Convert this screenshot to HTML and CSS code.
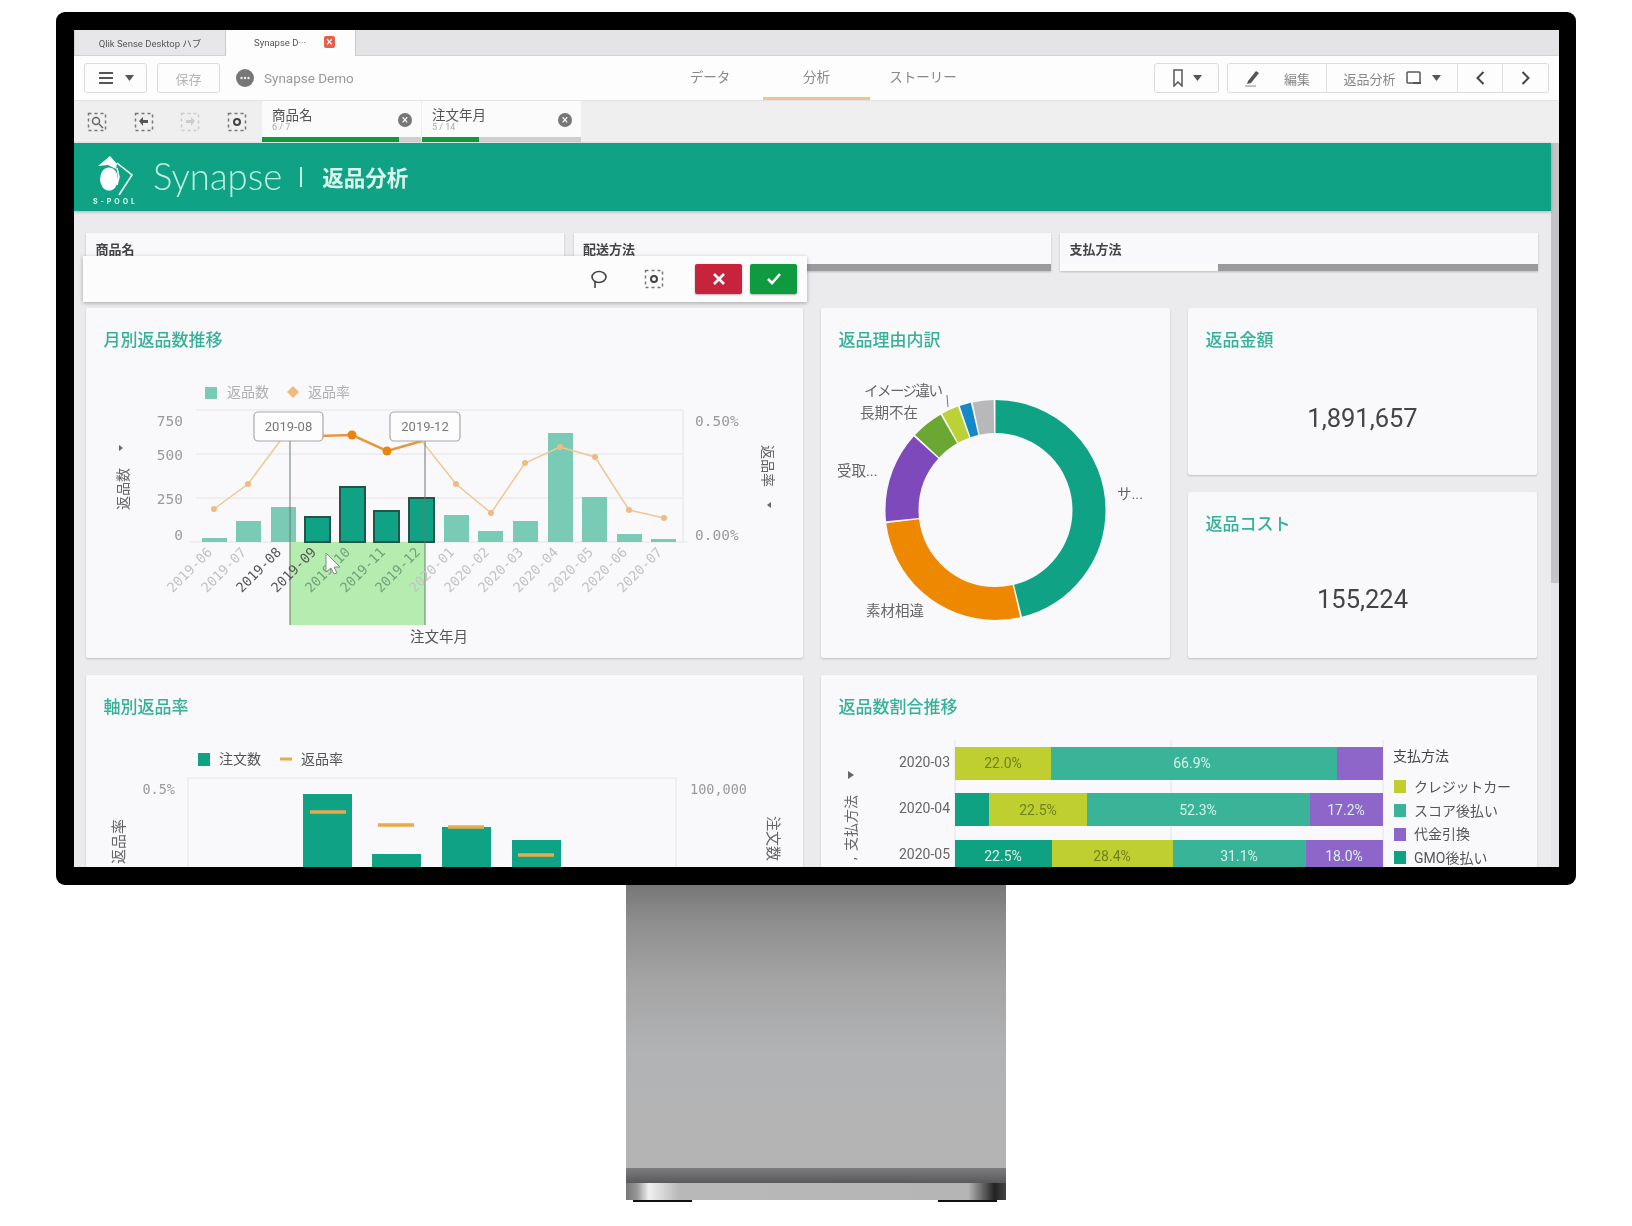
FILE: index.html
```html
<!DOCTYPE html>
<html lang="ja">
<head>
    <meta charset="UTF-8">
    <title>Synapse Demo - 返品分析</title>
    <link rel="stylesheet" href="styles.css">
</head>
<body>
    <div class="monitor">
        <div class="screen">
            <div class="tabbar">
                <div class="tab">Qlik Sense Desktop ハブ</div>
                <div class="tab tab-active">
                    <span>Synapse D···</span>
                    <span class="tab-close">×</span>
                </div>
            </div>

            <div class="toolbar">
                <div class="tool-left">
                    <div class="btn btn-menu">
                        <svg width="16" height="14" viewBox="0 0 16 14"><path d="M1 2h14M1 7h14M1 12h14" stroke="#555" stroke-width="2"/></svg>
                        <svg width="9" height="6" viewBox="0 0 9 6"><path d="M0 0h9L4.5 6z" fill="#555"/></svg>
                    </div>
                    <div class="btn btn-save">保存</div>
                    <svg class="app-icon" width="18" height="18" viewBox="0 0 18 18"><circle cx="9" cy="9" r="9" fill="#777"/><circle cx="5.5" cy="9" r="1.2" fill="#eee"/><circle cx="9" cy="9" r="1.2" fill="#eee"/><circle cx="12.5" cy="9" r="1.2" fill="#eee"/></svg>
                    <span class="app-name">Synapse Demo</span>
                </div>
                <div class="nav">
                    <div class="nav-item">データ</div>
                    <div class="nav-item nav-active">分析</div>
                    <div class="nav-item">ストーリー</div>
                </div>
                <div class="tool-right">
                    <div class="btn btn-bookmark">
                        <svg width="12" height="18" viewBox="0 0 12 18"><path d="M2 1h8v16l-4-4-4 4z" fill="none" stroke="#555" stroke-width="1.5"/></svg>
                        <svg width="9" height="6" viewBox="0 0 9 6"><path d="M0 0h9L4.5 6z" fill="#555"/></svg>
                    </div>
                    <div class="btn-group">
                        <div class="seg seg-edit">
                            <svg width="18" height="18" viewBox="0 0 18 18"><path d="M4 12 12 2l3 2-8 10-4 1z" fill="#555"/><path d="M1 17h11" stroke="#888" stroke-width="1"/></svg>
                            <span>編集</span>
                        </div>
                        <div class="seg seg-sheet">
                            <span>返品分析</span>
                            <svg width="16" height="14" viewBox="0 0 16 14"><rect x="1" y="1" width="13" height="11" rx="1" fill="none" stroke="#555" stroke-width="1.5"/><path d="M7 12h8" stroke="#555" stroke-width="2"/></svg>
                            <svg width="9" height="6" viewBox="0 0 9 6"><path d="M0 0h9L4.5 6z" fill="#555"/></svg>
                        </div>
                        <div class="seg seg-arrow">
                            <svg width="9" height="14" viewBox="0 0 9 14"><path d="M7.5 1 1.5 7l6 6" fill="none" stroke="#444" stroke-width="2"/></svg>
                        </div>
                        <div class="seg seg-arrow">
                            <svg width="9" height="14" viewBox="0 0 9 14"><path d="m1.5 1 6 6-6 6" fill="none" stroke="#444" stroke-width="2"/></svg>
                        </div>
                    </div>
                </div>
            </div>

            <div class="selbar">
                <div class="sel-icon">
                    <svg width="20" height="20" viewBox="0 0 20 20"><rect x="1.5" y="1.5" width="17" height="17" fill="none" stroke="#777" stroke-width="1.5" stroke-dasharray="3 3"/><circle cx="9" cy="9" r="3.5" fill="none" stroke="#666" stroke-width="1.5"/><path d="m12 12 4 4" stroke="#666" stroke-width="1.5"/></svg>
                </div>
                <div class="sel-icon">
                    <svg width="20" height="20" viewBox="0 0 20 20"><rect x="1.5" y="1.5" width="17" height="17" fill="none" stroke="#777" stroke-width="1.5" stroke-dasharray="3 3"/><path d="M5 9 9 5v3h5v3H9v3z" fill="#555"/></svg>
                </div>
                <div class="sel-icon sel-icon-off">
                    <svg width="20" height="20" viewBox="0 0 20 20"><rect x="1.5" y="1.5" width="17" height="17" fill="none" stroke="#ccc" stroke-width="1.5" stroke-dasharray="3 3"/><path d="M15 9l-4-4v3H6v3h5v3z" fill="#ccc"/></svg>
                </div>
                <div class="sel-icon">
                    <svg width="20" height="20" viewBox="0 0 20 20"><rect x="1.5" y="1.5" width="17" height="17" fill="none" stroke="#777" stroke-width="1.5" stroke-dasharray="3 3"/><circle cx="10" cy="10" r="3" fill="none" stroke="#444" stroke-width="2"/></svg>
                </div>
                <div class="chip">
                    <div class="chip-body">
                        <div class="chip-text">
                            <div class="chip-name">商品名</div>
                            <div class="chip-count">6 / 7</div>
                        </div>
                        <span class="chip-x">×</span>
                    </div>
                    <div class="chip-bar"><div class="chip-fill" style="width:86%"></div></div>
                </div>
                <div class="chip">
                    <div class="chip-body">
                        <div class="chip-text">
                            <div class="chip-name">注文年月</div>
                            <div class="chip-count">5 / 14</div>
                        </div>
                        <span class="chip-x">×</span>
                    </div>
                    <div class="chip-bar"><div class="chip-fill" style="width:36%"></div></div>
                </div>
            </div>

            <div class="sheet">
                <div class="sheet-main">
                    <div class="banner">
                        <svg class="logo" width="46" height="50" viewBox="0 0 46 50">
                            <path d="M19 0 7 10l10-1 8 4 1-5z" fill="#fff"/>
                            <ellipse cx="18" cy="23" rx="9" ry="11.5" fill="#fff"/>
                            <path d="M26 7 41 19 28 39M26 12l2 9-2 8" fill="none" stroke="#fff" stroke-width="1.5"/>
                            <text class="logo-text" x="2" y="48" textLength="42">S-POOL</text>
                        </svg>
                        <span class="brand">Synapse</span>
                        <span class="brand-sep"></span>
                        <span class="brand-page">返品分析</span>
                    </div>

                    <div class="filters">
                        <div class="filter">
                            <div class="filter-name">商品名</div>
                            <div class="filter-bar"></div>
                        </div>
                        <div class="filter">
                            <div class="filter-name">配送方法</div>
                            <div class="filter-bar"></div>
                        </div>
                        <div class="filter">
                            <div class="filter-name">支払方法</div>
                            <div class="filter-bar"><div class="filter-fill" style="width:33%"></div></div>
                        </div>
                    </div>

                    <!-- 選択中のツールバー -->
                    <div class="popup">
                        <svg width="20" height="20" viewBox="0 0 20 20"><ellipse cx="10" cy="8" rx="7" ry="5.5" fill="none" stroke="#444" stroke-width="1.6"/><path d="M6 12v7" stroke="#444" stroke-width="1.6"/></svg>
                        <svg class="popup-sel" width="20" height="20" viewBox="0 0 20 20"><rect x="1.5" y="1.5" width="17" height="17" fill="none" stroke="#777" stroke-width="1.5" stroke-dasharray="3 3"/><circle cx="10" cy="10" r="3" fill="none" stroke="#444" stroke-width="2"/></svg>
                        <div class="popup-btn popup-no">
                            <svg width="14" height="14" viewBox="0 0 14 14"><path d="m2 2 10 10M12 2 2 12" stroke="#fff" stroke-width="2.6"/></svg>
                        </div>
                        <div class="popup-btn popup-ok">
                            <svg width="16" height="14" viewBox="0 0 16 14"><path d="m2 7 4 4 8-9" fill="none" stroke="#fff" stroke-width="2.6"/></svg>
                        </div>
                    </div>

                    <div class="board">
                        <section class="card card-monthly">
                            <h2 class="card-title">月別返品数推移</h2>
                            <svg class="chart" width="717" height="310" viewBox="86 348 717 310">
                                <rect class="sq-light" x="205" y="387" width="12" height="12"/>
                                <text class="legend-soft" x="227" y="397">返品数</text>
                                <path d="M293 386l6 6-6 6-6-6z" fill="#efbb7c"/>
                                <text class="legend-soft" x="308" y="397">返品率</text>

                                <path class="grid" d="M196 410H683M196 454H683M196 498H683M189 542H687M683 410V542"/>
                                <text class="mono end" x="183" y="426">750</text>
                                <text class="mono end" x="183" y="460">500</text>
                                <text class="mono end" x="183" y="504">250</text>
                                <text class="mono end" x="183" y="540">0</text>
                                <text class="mono" x="695" y="426">0.50%</text>
                                <text class="mono" x="695" y="540">0.00%</text>

                                <path d="M119 445l4 3-4 3z" fill="#666"/>
                                <text class="axis" transform="translate(128 510) rotate(-90)">返品数</text>
                                <text class="axis" transform="translate(763 445) rotate(90)">返品率</text>
                                <path d="M771 502l-4 3 4 3z" fill="#666"/>

                                <rect x="290" y="542" width="135" height="83" fill="#b5edb0"/>

                                <rect class="bar" x="202" y="538" width="25" height="4"/>
                                <rect class="bar" x="236" y="521" width="25" height="21"/>
                                <rect class="bar" x="271" y="507" width="25" height="35"/>
                                <rect class="bar-on" x="305" y="517" width="25" height="25"/>
                                <rect class="bar-on" x="340" y="487" width="25" height="55"/>
                                <rect class="bar-on" x="374" y="511" width="25" height="31"/>
                                <rect class="bar-on" x="409" y="498" width="25" height="44"/>
                                <rect class="bar" x="444" y="515" width="25" height="27"/>
                                <rect class="bar" x="478" y="531" width="25" height="11"/>
                                <rect class="bar" x="513" y="521" width="25" height="21"/>
                                <rect class="bar" x="548" y="433" width="25" height="109"/>
                                <rect class="bar" x="582" y="497" width="25" height="45"/>
                                <rect class="bar" x="617" y="534" width="25" height="8"/>
                                <rect class="bar" x="651" y="539" width="25" height="3"/>

                                <polyline class="line" points="214,509 248,484 283,437 318,436 352,435 387,451 422,441 456,484 491,513 525,463 560,447 595,457 629,510 664,518"/>
                                <polyline class="line-on" points="318,436 352,435 387,451 422,441"/>
                                <g fill="#eebb80">
                                    <circle cx="214" cy="509" r="3"/>
                                    <circle cx="248" cy="484" r="3"/>
                                    <circle cx="456" cy="484" r="3"/>
                                    <circle cx="491" cy="513" r="3"/>
                                    <circle cx="525" cy="463" r="3"/>
                                    <circle cx="560" cy="447" r="3"/>
                                    <circle cx="595" cy="457" r="3"/>
                                    <circle cx="629" cy="510" r="3"/>
                                    <circle cx="664" cy="518" r="3"/>
                                </g>
                                <circle cx="352" cy="435" r="4.5" fill="#e5860f"/>
                                <circle cx="387" cy="451" r="4.5" fill="#e5860f"/>

                                <path d="M290 441V625M425 441V625" stroke="#6d786d" stroke-width="1"/>
                                <rect class="tip" x="254" y="412" width="69" height="29" rx="4"/>
                                <text class="tip-text" x="288.5" y="431">2019-08</text>
                                <rect class="tip" x="390" y="412" width="70" height="29" rx="4"/>
                                <text class="tip-text" x="425" y="431">2019-12</text>

                                <g class="months">
                                    <text transform="translate(213 553) rotate(-45)">2019-06</text>
                                    <text transform="translate(247 553) rotate(-45)">2019-07</text>
                                    <text class="month-dark" transform="translate(282 553) rotate(-45)">2019-08</text>
                                    <text class="month-dark" transform="translate(317 553) rotate(-45)">2019-09</text>
                                    <text class="month-sel" transform="translate(351 553) rotate(-45)">2019-10</text>
                                    <text class="month-sel" transform="translate(386 553) rotate(-45)">2019-11</text>
                                    <text class="month-sel" transform="translate(421 553) rotate(-45)">2019-12</text>
                                    <text transform="translate(455 553) rotate(-45)">2020-01</text>
                                    <text transform="translate(490 553) rotate(-45)">2020-02</text>
                                    <text transform="translate(524 553) rotate(-45)">2020-03</text>
                                    <text transform="translate(559 553) rotate(-45)">2020-04</text>
                                    <text transform="translate(594 553) rotate(-45)">2020-05</text>
                                    <text transform="translate(628 553) rotate(-45)">2020-06</text>
                                    <text transform="translate(663 553) rotate(-45)">2020-07</text>
                                </g>
                                <text class="axis-x" x="410" y="642">注文年月</text>
                                <path d="M326 553v19l5-4 3 6 3-1-3-6h6z" fill="#fff" stroke="#888" stroke-width="1"/>
                            </svg>
                        </section>

                        <section class="card card-donut">
                            <h2 class="card-title">返品理由内訳</h2>
                            <svg class="chart" width="349" height="310" viewBox="821 348 349 310">
                                <g class="donut" transform="rotate(-90 995.5 510)">
                                    <circle cx="995.5" cy="510" r="93.5" pathLength="360" stroke="#0fa284" stroke-dasharray="166 194" stroke-dashoffset="0"/>
                                    <circle cx="995.5" cy="510" r="93.5" pathLength="360" stroke="#ee8800" stroke-dasharray="96 264" stroke-dashoffset="-167"/>
                                    <circle cx="995.5" cy="510" r="93.5" pathLength="360" stroke="#7e49bb" stroke-dasharray="48 312" stroke-dashoffset="-264"/>
                                    <circle cx="995.5" cy="510" r="93.5" pathLength="360" stroke="#6aa733" stroke-dasharray="17 343" stroke-dashoffset="-313"/>
                                    <circle cx="995.5" cy="510" r="93.5" pathLength="360" stroke="#bcd135" stroke-dasharray="9 351" stroke-dashoffset="-331"/>
                                    <circle cx="995.5" cy="510" r="93.5" pathLength="360" stroke="#1488c8" stroke-dasharray="6 354" stroke-dashoffset="-341"/>
                                    <circle cx="995.5" cy="510" r="93.5" pathLength="360" stroke="#b8b8bb" stroke-dasharray="11 349" stroke-dashoffset="-348"/>
                                </g>
                                <path d="M947 395l1 12" stroke="#777" stroke-width="1"/>
                                <text class="pie-label" x="864" y="396" textLength="79">イメージ違い</text>
                                <text class="pie-label" x="860" y="418">長期不在</text>
                                <text class="pie-label" x="837" y="476">受取...</text>
                                <text class="pie-label" x="1117" y="499">サ...</text>
                                <text class="pie-label" x="866" y="616">素材相違</text>
                            </svg>
                        </section>

                        <section class="card card-kpi">
                            <h2 class="card-title">返品金額</h2>
                            <div class="kpi-value">1,891,657</div>
                        </section>

                        <section class="card card-kpi card-kpi-low">
                            <h2 class="card-title">返品コスト</h2>
                            <div class="kpi-value">155,224</div>
                        </section>

                        <section class="card card-wide-left">
                            <h2 class="card-title">軸別返品率</h2>
                            <svg class="chart" width="717" height="200" viewBox="86 715 717 200">
                                <rect x="198" y="753" width="12" height="13" fill="#0fa284"/>
                                <text class="legend" x="219" y="764">注文数</text>
                                <path d="M280 759h12" stroke="#eba94f" stroke-width="3"/>
                                <text class="legend" x="301" y="764">返品率</text>
                                <rect class="grid" x="188" y="778" width="488" height="130"/>
                                <text class="mono-s end" x="175" y="794">0.5%</text>
                                <text class="mono-s" x="690" y="794">100,000</text>
                                <text class="axis axis-lg" transform="translate(124 864) rotate(-90)">返品率</text>
                                <text class="axis axis-lg" transform="translate(768 816) rotate(90)">注文数</text>
                                <g fill="#0fa284">
                                    <rect x="303" y="794" width="49" height="100"/>
                                    <rect x="372" y="854" width="49" height="40"/>
                                    <rect x="442" y="827" width="49" height="70"/>
                                    <rect x="512" y="840" width="49" height="50"/>
                                </g>
                                <path d="M310 812h36M378 825h36M448 827h36M518 855h36" stroke="#e7a94a" stroke-width="3.5"/>
                            </svg>
                        </section>

                        <section class="card card-wide-right">
                            <h2 class="card-title">返品数割合推移</h2>
                            <svg class="chart" width="716" height="200" viewBox="821 715 716 200">
                                <path class="grid" d="M955 740V880M1171 740V880M1383 740V880"/>
                                <path d="M848 771l6 4-6 4z" fill="#666"/>
                                <text class="axis" transform="translate(856 851) rotate(-90)">支払方法</text>
                                <text class="axis" transform="translate(856 860) rotate(-90)">,</text>

                                <text class="row-label" x="950" y="767">2020-03</text>
                                <rect class="c-lime" x="955" y="747" width="96" height="33"/>
                                <rect class="c-teal" x="1051" y="747" width="286" height="33"/>
                                <rect class="c-purple" x="1337" y="747" width="46" height="33"/>
                                <text class="val val-dark" x="1003" y="768">22.0%</text>
                                <text class="val" x="1192" y="768">66.9%</text>

                                <text class="row-label" x="950" y="813">2020-04</text>
                                <rect class="c-green" x="955" y="793" width="34" height="33"/>
                                <rect class="c-lime" x="989" y="793" width="98" height="33"/>
                                <rect class="c-teal" x="1087" y="793" width="223" height="33"/>
                                <rect class="c-purple" x="1310" y="793" width="73" height="33"/>
                                <text class="val val-dark" x="1038" y="815">22.5%</text>
                                <text class="val" x="1198" y="815">52.3%</text>
                                <text class="val" x="1346" y="815">17.2%</text>

                                <text class="row-label" x="950" y="859">2020-05</text>
                                <rect class="c-green" x="955" y="840" width="97" height="33"/>
                                <rect class="c-lime" x="1052" y="840" width="121" height="33"/>
                                <rect class="c-teal" x="1173" y="840" width="133" height="33"/>
                                <rect class="c-purple" x="1306" y="840" width="77" height="33"/>
                                <text class="val" x="1003" y="861">22.5%</text>
                                <text class="val val-dark" x="1112" y="861">28.4%</text>
                                <text class="val" x="1239" y="861">31.1%</text>
                                <text class="val" x="1344" y="861">18.0%</text>

                                <text class="legend-title" x="1393" y="761">支払方法</text>
                                <rect class="c-lime" x="1394" y="780" width="12" height="13"/>
                                <text class="legend" x="1414" y="792" textLength="97">クレジットカー</text>
                                <rect class="c-teal" x="1394" y="804" width="12" height="13"/>
                                <text class="legend" x="1414" y="816">スコア後払い</text>
                                <rect class="c-purple" x="1394" y="828" width="12" height="13"/>
                                <text class="legend" x="1414" y="839">代金引換</text>
                                <rect class="c-green" x="1394" y="851" width="12" height="13"/>
                                <text class="legend" x="1414" y="863">GMO後払い</text>
                            </svg>
                        </section>
                    </div>
                </div>
                <div class="scrollbar"><div class="scroll-thumb"></div></div>
            </div>
        </div>
    </div>

    <div class="stand">
        <div class="stand-neck"></div>
        <div class="stand-lip"></div>
        <div class="stand-foot"></div>
        <div class="stand-pads"><span></span><span></span></div>
    </div>
</body>
</html>
```

FILE: styles.css
```css
* {
    box-sizing: border-box;
}
body {
    margin: 0;
    background: #fff;
    font-family: Roboto, "Noto Sans CJK JP", sans-serif;
    color: #555;
}

/* monitor */
.monitor {
    width: 1520px;
    height: 873px;
    margin: 12px 0 0 56px;
    padding: 18px 17px 18px 18px;
    background: #000;
    border-radius: 9px;
}
.screen {
    height: 100%;
    display: flex;
    flex-direction: column;
    overflow: hidden;
    background: #ebebed;
    filter: blur(0.6px);
}
.stand {
    width: 380px;
    margin-left: 626px;
}
.stand-neck {
    height: 283px;
    background: linear-gradient(#777 0, #8f8f90 14%, #a4a4a5 34%, #b2b3b4 60%, #b4b4b5 100%);
}
.stand-lip {
    height: 15px;
    background: linear-gradient(#7d7d7f, #58595b);
}
.stand-foot {
    height: 17px;
    background: linear-gradient(90deg, #777 0, #999 3%, #f0f0f0 6%, #b8b8b8 14%, #b5b5b6 90%, #777 93%, #222 97%, #444 100%);
}
.stand-pads {
    display: flex;
    justify-content: space-between;
    padding: 0 9px 0 7px;
}
.stand-pads span {
    width: 59px;
    height: 2px;
    background: #111;
}

/* tabs */
.tabbar {
    height: 26px;
    display: flex;
    flex: none;
    background: #e4e4e6;
    border-bottom: 1px solid #d2d2d4;
}
.tab {
    width: 152px;
    display: flex;
    align-items: center;
    justify-content: center;
    font-size: 9.5px;
    color: #555;
    background: #e7e7e9;
    border-right: 1px solid #c9c9cb;
    border-left: 1px solid #d5d5d7;
}
.tab-active {
    width: 130px;
    height: 26px;
    gap: 18px;
    padding-left: 8px;
    padding-bottom: 2px;
    background: #fdfdfe;
    border: none;
    border-right: 1px solid #c9c9cb;
}
.tab-close {
    width: 11px;
    height: 12px;
    border-radius: 2px;
    background: #e4604c;
    color: #fff;
    font-size: 12px;
    line-height: 12px;
    text-align: center;
}

/* toolbar */
.toolbar {
    height: 45px;
    flex: none;
    display: grid;
    grid-template-columns: 1fr auto 1fr;
    align-items: center;
    padding: 0 10px;
    background: #fdfdfe;
    border-bottom: 1px solid #e2e2e4;
}
.tool-left, .tool-right {
    display: flex;
    align-items: center;
}
.tool-right {
    justify-content: flex-end;
}
.btn {
    height: 30px;
    width: 63px;
    display: flex;
    align-items: center;
    justify-content: center;
    background: #fdfdfe;
    border: 1px solid #dcdcde;
    border-radius: 3px;
}
.btn-menu {
    gap: 11px;
}
.btn-save {
    margin-left: 10px;
    font-size: 13px;
    color: #b5b5b5;
}
.app-icon {
    margin-left: 16px;
}
.app-name {
    margin-left: 10px;
    font-size: 13.5px;
    color: #999;
}
.nav {
    display: flex;
    height: 44px;
}
.nav-item {
    width: 106.5px;
    padding-top: 10px;
    text-align: center;
    font-size: 13.5px;
    color: #888;
}
.nav-active {
    border-bottom: 3px solid #e9c795;
}
.btn-bookmark {
    width: 65px;
    gap: 9px;
}
.btn-group {
    display: flex;
    height: 30px;
    width: 322px;
    margin-left: 8px;
    border: 1px solid #dcdcde;
    border-radius: 3px;
}
.seg {
    display: flex;
    align-items: center;
    justify-content: center;
    border-right: 1px solid #e0e0e2;
    font-size: 13px;
    color: #888;
}
.seg:last-child {
    border-right: none;
}
.seg-edit {
    width: 99px;
    gap: 22px;
}
.seg-sheet {
    width: 131px;
    gap: 10px;
}
.seg-arrow {
    width: 45px;
}

/* selections */
.selbar {
    height: 41px;
    flex: none;
    display: flex;
    background: #efeff0;
}
.sel-icon {
    width: 46.5px;
    display: flex;
    align-items: center;
    justify-content: center;
}
.chip {
    width: 159px;
    margin-right: 1px;
    display: flex;
    flex-direction: column;
    background: #fbfbfc;
}
.sel-icon + .chip {
    margin-left: 2px;
}
.chip-body {
    flex: 1;
    display: flex;
    align-items: center;
    justify-content: space-between;
    padding: 1px 9px 0 10px;
}
.chip-name {
    font-size: 13.5px;
    line-height: 15px;
    color: #555;
}
.chip-count {
    font-size: 9px;
    line-height: 9px;
    color: #aaa;
}
.chip-x {
    width: 14px;
    height: 14px;
    border-radius: 50%;
    background: #777;
    color: #fff;
    font-size: 12px;
    line-height: 14px;
    text-align: center;
}
.chip-bar {
    height: 5px;
    background: #cfcfd0;
}
.chip-fill {
    height: 100%;
    background: #0f9a3f;
}

/* sheet */
.sheet {
    flex: 1;
    min-height: 0;
    margin-top: 1px;
    display: flex;
}
.sheet-main {
    position: relative;
    flex: 1;
    padding: 0 13px 0 12px;
}
.scrollbar {
    width: 8px;
    background: #e6e6e8;
}
.scroll-thumb {
    height: 440px;
    background: #c4c4c6;
}
.banner {
    height: 68px;
    margin: 0 -13px 0 -12px;
    display: flex;
    align-items: center;
    padding-left: 17px;
    background: #0fa284;
    box-shadow: 0 1px 3px rgba(0, 0, 0, 0.25);
}
.logo {
    margin-top: 8px;
    overflow: visible;
}
.logo-text {
    font-family: Inter, sans-serif;
    font-size: 7px;
    font-weight: 700;
    fill: #e6f7f2;
}
.brand {
    margin: -3px 0 0 16px;
    font-family: Lato, sans-serif;
    font-weight: 300;
    font-size: 36.5px;
    color: #bdf0e0;
}
.brand-sep {
    width: 2px;
    height: 20px;
    margin: 0 20px 0 18px;
    background: #c8f2e6;
}
.brand-page {
    margin-top: -1px;
    font-size: 21.5px;
    font-weight: 700;
    color: #d9f5ec;
}

/* filter boxes */
.filters {
    display: grid;
    grid-template-columns: 478px 477px 478px;
    gap: 9.5px;
    margin-top: 22px;
}
.filter {
    height: 38px;
    display: flex;
    flex-direction: column;
    background: #f9f9fb;
    box-shadow: 0 1px 2px rgba(0, 0, 0, 0.2);
}
.filter-name {
    flex: 1;
    padding: 6px 0 0 9.5px;
    font-size: 13px;
    font-weight: 700;
    color: #444;
}
.filter-bar {
    height: 7px;
    background: #9a9a9c;
}
.filter-fill {
    height: 100%;
    background: #fbfbfc;
}
.popup {
    position: absolute;
    top: 113px;
    left: 9px;
    width: 724px;
    height: 46px;
    display: flex;
    align-items: center;
    justify-content: flex-end;
    padding-right: 10px;
    background: #fcfcfd;
    box-shadow: 0 1px 4px rgba(0, 0, 0, 0.3);
}
.popup-sel {
    margin: 0 31px 0 35px;
}
.popup-btn {
    width: 47px;
    height: 30px;
    display: flex;
    align-items: center;
    justify-content: center;
    border-radius: 2px;
    box-shadow: 0 1px 2px rgba(0, 0, 0, 0.3);
}
.popup-no {
    background: #c8233c;
    margin-right: 8px;
}
.popup-ok {
    background: #0f9a3f;
}

/* dashboard */
.board {
    display: grid;
    grid-template-columns: 717px 349px 349px;
    grid-template-rows: 167px 166px 250px;
    gap: 17px 18px;
    margin-top: 37px;
}
.card {
    display: flex;
    flex-direction: column;
    background: #f9f8fb;
    border-radius: 2px;
    box-shadow: 0 1px 2px rgba(0, 0, 0, 0.2);
}
.card-title {
    margin: 0;
    padding: 23px 0 0 17.5px;
    height: 40px;
    font-size: 17px;
    line-height: 18px;
    font-weight: 500;
    color: #35b198;
}
.card-monthly, .card-donut {
    grid-row: span 2;
}
.card-wide-right {
    grid-column: span 2;
}
.chart {
    display: block;
    flex: none;
    overflow: hidden;
}
.kpi-value {
    flex: 1;
    display: flex;
    align-items: center;
    justify-content: center;
    padding-top: 12px;
    font-size: 25.5px;
    color: #444;
}
.card-kpi-low .kpi-value {
    padding-top: 8px;
}

/* chart text */
.chart text {
    font-family: Roboto, "Noto Sans CJK JP", sans-serif;
}
.chart .mono, .chart .mono-s, .chart .months text {
    font-family: "DejaVu Sans Mono", monospace;
}
.mono {
    font-size: 14.5px;
    fill: #9a9a9a;
}
.mono-s {
    font-size: 13.5px;
    fill: #9a9a9a;
}
.end {
    text-anchor: end;
}
.axis {
    font-size: 14px;
    fill: #666;
}
.axis-lg {
    font-size: 15px;
}
.axis-x {
    font-size: 14.5px;
    fill: #555;
}
.legend {
    font-size: 14px;
    fill: #555;
}
.legend-soft {
    font-size: 14px;
    fill: #b0b0b0;
}
.legend-title {
    font-size: 14px;
    fill: #444;
}
.grid {
    fill: none;
    stroke: #ecebee;
    stroke-width: 1.5;
}
.sq-light {
    fill: #79cbb6;
}
.bar {
    fill: #79cbb6;
}
.bar-on {
    fill: #0fa284;
    stroke: #22544a;
    stroke-width: 2;
}
.line {
    fill: none;
    stroke: #f0c795;
    stroke-width: 1.5;
}
.line-on {
    fill: none;
    stroke: #e39a3e;
    stroke-width: 2.5;
}
.tip {
    fill: #fdfdfe;
    stroke: #a8a8aa;
    stroke-width: 1.2;
}
.tip-text {
    font-size: 13px;
    fill: #777;
    text-anchor: middle;
}
.months text {
    font-size: 13.5px;
    fill: #c2c2c2;
    text-anchor: end;
}
.months .month-dark {
    fill: #555;
}
.months .month-sel {
    fill: #6fa17a;
}
.donut circle {
    fill: none;
    stroke-width: 33;
}
.pie-label {
    font-size: 14.5px;
    fill: #666;
}
.row-label {
    font-size: 14px;
    fill: #666;
    text-anchor: end;
}
.val {
    font-size: 14px;
    fill: #d8f1ea;
    text-anchor: middle;
}
.val-dark {
    fill: #70801f;
}
.c-lime {
    fill: #bfcf30;
}
.c-teal {
    fill: #3ab499;
}
.c-purple {
    fill: #8e66c9;
}
.c-green {
    fill: #0ea282;
}
```
